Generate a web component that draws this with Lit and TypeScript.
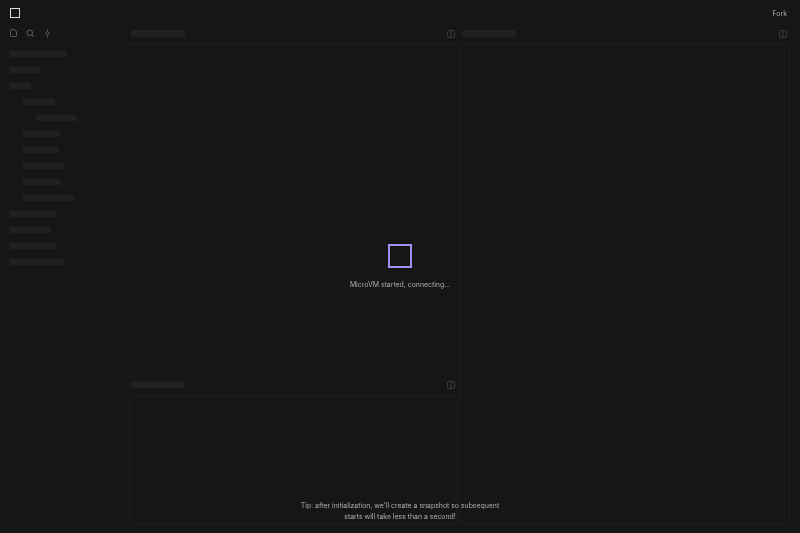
import { LitElement, html, css, svg } from "lit";
import { customElement } from "lit/decorators.js";

const tree: [number, number][] = [
  [0, 57], [0, 30], [0, 21], [1, 32], [2, 41], [1, 37], [1, 36], [1, 41], [1, 38], [1, 51],
  [0, 46], [0, 41], [0, 46], [0, 54],
];

const splitIcon = svg`<svg class="split" viewBox="0 0 8 8" width="8" height="8" fill="none" stroke="#3a3a3a" stroke-width="1"><rect x="0.5" y="0.5" width="7" height="7" rx="1.5"/><path d="M4 .5v7"/></svg>`;

@customElement("app-root")
export class AppRoot extends LitElement {
  static styles = css`
    :host { display: block; width: 800px; height: 533px; background: #161616; overflow: hidden; position: relative; font-family: Inter, "Liberation Sans", sans-serif; }
    .top { height: 26px; display: flex; align-items: center; justify-content: space-between; padding: 0 13px 0 10px; box-sizing: border-box; }
    .logo { width: 8px; height: 8px; border: 1px solid #dcdcdc; box-sizing: content-box; filter: blur(0.3px); }
    .fork { font-size: 6.95px; color: #adadad; padding-top: 1px; filter: blur(0.25px); }
    .body { display: flex; height: 507px; }
    .side { width: 129px; flex: none; box-sizing: border-box; padding: 0 10px; }
    .tabs { display: flex; gap: 9px; height: 14px; align-items: center; margin-bottom: 11px; }
    .tabs svg { display: block; }
    .tree { display: flex; flex-direction: column; gap: 10px; }
    .sk { height: 6px; border-radius: 2px; background: #212121; }
    .main { flex: 1; display: flex; gap: 2px; padding-right: 10px; }
    .col { width: 329px; flex: none; display: flex; flex-direction: column; }
    .col.wide { width: 330px; }
    .head { height: 18px; flex: none; display: flex; align-items: center; justify-content: space-between; padding: 0 3px 3px 2px; box-sizing: border-box; }
    .head .sk { height: 7px; width: 54px; }
    .split { display: block; }
    .panel { border: 1px solid #1e1e1e; border-radius: 2px; box-sizing: border-box; }
    .upper { flex: 1; border-width: 1px 0 0; border-radius: 0; }
    .lower { height: 128px; flex: none; margin-bottom: 9px; }
    .right { flex: 1; margin-bottom: 9px; }
    .spaced { margin: 9px 0 1px; }
    .load { position: absolute; left: 0; right: 0; top: 244px; display: flex; flex-direction: column; align-items: center; }
    .square { width: 20px; height: 20px; border: 2px solid #a08ff0; box-sizing: content-box; filter: blur(0.3px); }
    .msg { margin-top: 11px; font-size: 6.9px; line-height: 11px; color: #adadad; filter: blur(0.25px); }
    .tip { position: absolute; left: 0; right: 0; top: 500px; text-align: center; font-size: 6.9px; line-height: 11px; color: #adadad; filter: blur(0.25px); }
  `;

  render() {
    return html`
      <div class="top"><div class="logo"></div><div class="fork">Fork</div></div>
      <div class="body">
        <div class="side">
          <div class="tabs">
            <svg width="7" height="8" viewBox="0 0 7 8" fill="none" stroke="#5e5e5e"><path d="M.5 1.5a1 1 0 0 1 1-1h2.5l2.5 2v4a1 1 0 0 1-1 1h-4a1 1 0 0 1-1-1z" stroke-linejoin="round"/></svg>
            <svg width="9" height="9" viewBox="0 0 9 9" fill="none" stroke="#5e5e5e"><circle cx="3.8" cy="3.8" r="2.8"/><path d="M6 6l2 2"/></svg>
            <svg width="7" height="9" viewBox="0 0 7 9" fill="none" stroke="#5e5e5e"><path d="M3.5 2.6L5.3 4.5 3.5 6.4 1.7 4.5z"/><path d="M3.5 .5v2M3.5 6.5v2"/></svg>
          </div>
          <div class="tree">
            ${tree.map(([d, w]) => html`<div class="sk" style="margin-left:${d * 13}px;width:${w}px"></div>`)}
          </div>
        </div>
        <div class="main">
          <div class="col">
            <div class="head"><div class="sk"></div>${splitIcon}</div>
            <div class="panel upper"></div>
            <div class="head spaced"><div class="sk"></div>${splitIcon}</div>
            <div class="panel lower"></div>
          </div>
          <div class="col wide">
            <div class="head"><div class="sk"></div>${splitIcon}</div>
            <div class="panel right"></div>
          </div>
        </div>
      </div>
      <div class="load"><div class="square"></div><div class="msg">MicroVM started, connecting...</div></div>
      <div class="tip">Tip: after initialization, we'll create a snapshot so subsequent<br />starts will take less than a second!</div>
    `;
  }
}
